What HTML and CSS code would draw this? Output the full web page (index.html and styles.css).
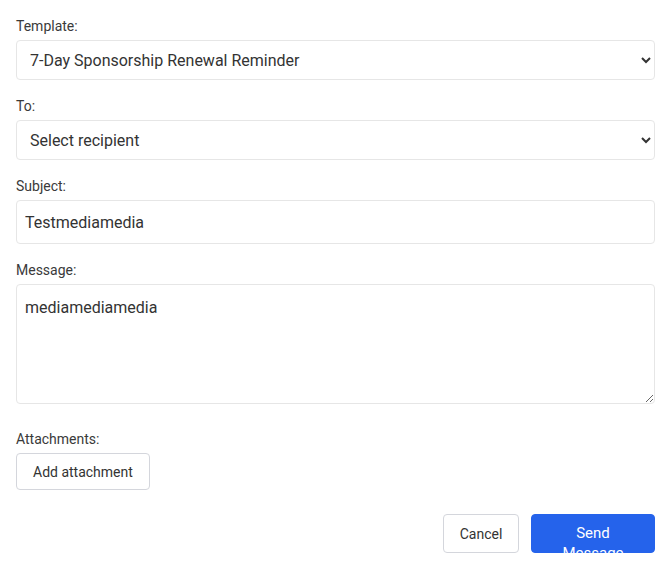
FILE: index.html
```html
<!DOCTYPE html>
<html lang="en">
<head>
<meta charset="utf-8">
<link rel="stylesheet" href="styles.css">
</head>
<body>
<form class="compose">
  <div class="field">
    <label class="field-label" for="tpl">Template:</label>
    <select id="tpl" class="control control-select">
      <option>7-Day Sponsorship Renewal Reminder</option>
    </select>
  </div>
  <div class="field">
    <label class="field-label" for="to">To:</label>
    <select id="to" class="control control-select">
      <option>Select recipient</option>
    </select>
  </div>
  <div class="field">
    <label class="field-label" for="subj">Subject:</label>
    <input id="subj" class="control control-input" type="text" value="Testmediamedia">
  </div>
  <div class="field field-message">
    <label class="field-label" for="msg">Message:</label>
    <textarea id="msg" class="control control-textarea">mediamediamedia</textarea>
  </div>
  <div class="field field-attach">
    <span class="field-label">Attachments:</span>
    <div class="attach-row">
      <button type="button" class="btn btn-outline">Add attachment</button>
    </div>
  </div>
  <div class="actions">
    <button type="button" class="btn btn-outline btn-cancel">Cancel</button>
    <button type="button" class="btn btn-primary"><span class="btn-text">Send Message</span></button>
  </div>
</form>
</body>
</html>
```
FILE: styles.css
```css
* { box-sizing: border-box; }

html, body {
  margin: 0;
  background: #ffffff;
}

body {
  font-family: Roboto, "Liberation Sans", Arial, sans-serif;
  color: #333333;
}

.compose {
  padding: 16px 16px 0 16px;
  display: flex;
  flex-direction: column;
}

.field {
  display: flex;
  flex-direction: column;
  margin-bottom: 16px;
}

.field-label {
  display: block;
  font-size: 14px;
  line-height: 20px;
  margin-bottom: 4px;
  color: #3a3a3a;
}

.control {
  width: 100%;
  font-family: inherit;
  font-size: 16px;
  color: #333333;
  background: #ffffff;
  border: 1px solid #e6e6e6;
  border-radius: 4px;
  outline: none;
}

.control-select {
  height: 40px;
  padding: 0 8px 0 9px;
}

.control-input {
  height: 44px;
  padding: 0 8px;
}

.control-textarea {
  display: block;
  height: 120px;
  padding: 12px 8px 8px 8px;
  line-height: 22px;
  resize: vertical;
}

.field-message {
  margin-bottom: 25px;
}

.field-attach {
  margin-bottom: 24px;
}

.attach-row {
  display: flex;
}

.btn {
  font-family: inherit;
  font-size: 14px;
  line-height: 20px;
  border-radius: 4px;
  cursor: pointer;
}

.btn-outline {
  background: #ffffff;
  color: #333333;
  border: 1px solid #d4d6dc;
  height: 37px;
  padding: 0 16px;
}

.actions {
  display: flex;
  justify-content: flex-end;
  gap: 12px;
}

.btn-cancel {
  height: 39px;
  width: 76px;
  padding: 0;
}

.btn-primary {
  width: 124px;
  height: 39px;
  background: #2563eb;
  color: #ffffff;
  border: 1px solid #2563eb;
  padding: 8px 24px 0 24px;
  display: flex;
  align-items: flex-start;
  justify-content: center;
  overflow: visible;
}

.btn-text {
  display: block;
  text-align: center;
  font-size: 15px;
  line-height: 20px;
}
```
